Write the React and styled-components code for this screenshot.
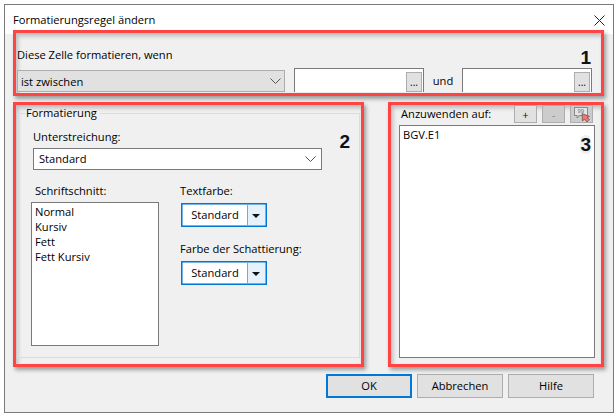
import React from "react";
import styled, { createGlobalStyle } from "styled-components";

const Global = createGlobalStyle`
  html, body {
    margin: 0;
    padding: 0;
    background: #fff;
  }
  * {
    box-sizing: border-box;
  }
`;

const ChevronIcon = () => (
  <svg width="11" height="6" viewBox="0 0 11 6">
    <path d="M0.5 0.5 L5.5 5.5 L10.5 0.5" fill="none" stroke="#555" strokeWidth="1" />
  </svg>
);

const RangeIcon = () => (
  <svg width="21" height="17" viewBox="0 0 21 17">
    <rect x="3.5" y="1.5" width="13" height="8" fill="#e4e4e4" stroke="#8a8a8a" />
    <path d="M6 9.5 L6 12 L9 9.5" fill="#e4e4e4" stroke="#8a8a8a" />
    <text x="6.5" y="7" fontSize="6" fontFamily="Liberation Sans, sans-serif" fill="#777">99</text>
    <path d="M11 7.5 L11.5 15 L13.5 13 L16 16 L18.5 13.5 L16 11.5 L18.5 10.5 Z" fill="#f27474" stroke="#6f5555" strokeWidth="0.8" />
  </svg>
);

const App = () => {
  return (
    <Page>
      <Global />
      <Window>
        <TitleBar>
          <Title>Formatierungsregel ändern</Title>
          <CloseButton>
            <svg width="11" height="11" viewBox="0 0 11 11">
              <path d="M0.5 0.5 L10.5 10.5 M10.5 0.5 L0.5 10.5" stroke="#222" strokeWidth="1" fill="none" />
            </svg>
          </CloseButton>
        </TitleBar>
        <Body>
          <ConditionFrame>
            <ConditionLabel>Diese Zelle formatieren, wenn</ConditionLabel>
            <ConditionRow>
              <ConditionSelect>
                <span>ist zwischen</span>
                <ChevronIcon />
              </ConditionSelect>
              <ValueInput>
                <EllipsisButton>...</EllipsisButton>
              </ValueInput>
              <AndLabel>und</AndLabel>
              <ValueInput>
                <EllipsisButton>...</EllipsisButton>
              </ValueInput>
            </ConditionRow>
            <Marker $right={10} $top={15}>1</Marker>
          </ConditionFrame>

          <Columns>
            <FormatFrame>
              <GroupBox>
                <Legend>Formatierung</Legend>
                <FieldLabel>Unterstreichung:</FieldLabel>
                <UnderlineSelect>
                  <span>Standard</span>
                  <ChevronIcon />
                </UnderlineSelect>
                <StyleColumns>
                  <StyleColumn>
                    <StyleLabel>Schriftschnitt:</StyleLabel>
                    <StyleList>
                      <StyleItem>Normal</StyleItem>
                      <StyleItem>Kursiv</StyleItem>
                      <StyleItem>Fett</StyleItem>
                      <StyleItem>Fett Kursiv</StyleItem>
                    </StyleList>
                  </StyleColumn>
                  <ColorColumn>
                    <FieldLabel>Textfarbe:</FieldLabel>
                    <ColorButton>
                      <ColorName>Standard</ColorName>
                      <ColorArrow />
                    </ColorButton>
                    <ShadeLabel>Farbe der Schattierung:</ShadeLabel>
                    <ColorButton>
                      <ColorName>Standard</ColorName>
                      <ColorArrow />
                    </ColorButton>
                  </ColorColumn>
                </StyleColumns>
              </GroupBox>
              <Marker $right={11} $top={27}>2</Marker>
            </FormatFrame>

            <ApplyFrame>
              <ApplyHeader>
                <ApplyLabel>Anzuwenden auf:</ApplyLabel>
                <ToolButton>+</ToolButton>
                <ToolButton $disabled>-</ToolButton>
                <ToolButton $disabled>
                  <RangeIcon />
                </ToolButton>
              </ApplyHeader>
              <RangeList>BGV.E1</RangeList>
              <Marker $right={10} $top={30} $halo>3</Marker>
            </ApplyFrame>
          </Columns>

          <Footer>
            <DialogButton $primary>OK</DialogButton>
            <DialogButton>Abbrechen</DialogButton>
            <DialogButton>Hilfe</DialogButton>
          </Footer>
        </Body>
      </Window>
    </Page>
  );
};

export default App;

const Page = styled.div`
  width: 615px;
  height: 413px;
  padding: 4px 1px 0 4px;
  overflow: hidden;
  font-family: "Open Sans", "Noto Sans", sans-serif;
  font-size: 11.15px;
  color: #000;
`;
const Window = styled.div`
  width: 610px;
  height: 409px;
  border: 1px solid #7a7a7a;
  background: #f0f0f0;
  display: flex;
  flex-direction: column;
`;
const TitleBar = styled.div`
  height: 29px;
  flex: none;
  background: #fff;
  display: flex;
  justify-content: space-between;
  padding: 7px 8px 0 8px;
`;
const Title = styled.div`
  line-height: 16px;
`;
const CloseButton = styled.div`
  width: 11px;
  height: 11px;
  margin-top: 2px;
`;
const Body = styled.div`
  flex: 1;
  display: flex;
  flex-direction: column;
  padding: 0 9px 0 8px;
  margin-top: -4px;
`;
const Frame = styled.div`
  position: relative;
  border: 3px solid #ff4444;
  background: #f0f0f0;
  box-shadow: 2px 3px 4px rgba(0, 0, 0, 0.35), inset 2px 3px 4px rgba(0, 0, 0, 0.22);
`;
const ConditionFrame = styled(Frame)`
  height: 66px;
  padding: 14px 0 0 1px;
`;
const ConditionLabel = styled.div`
  line-height: 16px;
`;
const ConditionRow = styled.div`
  display: flex;
  align-items: flex-end;
  margin-top: 5px;
`;
const ConditionSelect = styled.div`
  width: 268px;
  height: 22px;
  border: 1px solid #adadad;
  background: #e1e1e1;
  padding: 0 3px;
  display: flex;
  align-items: center;
  justify-content: space-between;
  margin-right: 9px;
`;
const ValueInput = styled.div`
  width: 130px;
  height: 24px;
  background: #fff;
  border: 1px solid #7a7a7a;
  border-bottom: none;
  padding: 3px 1px 0 0;
  display: flex;
  justify-content: flex-end;
`;
const EllipsisButton = styled.div`
  width: 16px;
  height: 20px;
  background: #e1e1e1;
  border: 1px solid #adadad;
  text-align: center;
  line-height: 18px;
  font-size: 10px;
`;
const AndLabel = styled.div`
  width: 38px;
  height: 24px;
  line-height: 26px;
  text-align: center;
`;
const Marker = styled.div`
  position: absolute;
  right: ${(p) => p.$right}px;
  top: ${(p) => p.$top}px;
  font-family: "Liberation Sans", sans-serif;
  font-weight: 700;
  font-size: 19px;
  line-height: 19px;
  color: #111;
  ${(p) => p.$halo && "background: #efefef; border-radius: 8px;"}
`;
const Columns = styled.div`
  display: flex;
  gap: 24px;
  margin-top: 6px;
`;
const FormatFrame = styled(Frame)`
  width: 351px;
  height: 265px;
  padding: 0 1px 0 1px;
`;
const GroupBox = styled.fieldset`
  margin: 0;
  height: 253px;
  min-width: 0;
  padding: 0 0 0 15px;
  border: 1px solid #dcdcdc;
`;
const Legend = styled.legend`
  margin-left: -7px;
  padding: 0 3px 0 0;
  line-height: 16px;
`;
const FieldLabel = styled.div`
  line-height: 16px;
  margin-top: 8px;
`;
const UnderlineSelect = styled.div`
  width: 289px;
  height: 22px;
  margin-top: 3px;
  border: 1px solid #7a7a7a;
  background: #fff;
  padding: 0 5px 1px;
  display: flex;
  align-items: center;
  justify-content: space-between;
`;
const StyleColumns = styled.div`
  display: flex;
  margin: 5px 0 0 -2px;
`;
const StyleColumn = styled.div`
  width: 149px;
`;
const StyleLabel = styled(FieldLabel)`
  margin-left: 4px;
`;
const StyleList = styled.div`
  width: 128px;
  height: 144px;
  margin-top: 3px;
  border: 1px solid #7a7a7a;
  background: #fff;
  padding: 1px 3px;
`;
const StyleItem = styled.div`
  line-height: 15px;
`;
const ColorColumn = styled.div`
  display: flex;
  flex-direction: column;
  align-items: flex-start;
`;
const ShadeLabel = styled(FieldLabel)`
  margin-top: 14px;
`;
const ColorButton = styled.div`
  width: 86px;
  height: 24px;
  margin: 4px 0 0 1px;
  border: 1px solid #0078d7;
  box-shadow: inset 0 0 0 0.5px #0078d7;
  background: #e5f1fb;
  display: flex;
  padding: 1px;
`;
const ColorName = styled.div`
  flex: 1;
  background: #fff;
  text-align: center;
  line-height: 20px;
  border-right: 1px solid #a0a0a0;
  margin-right: 2px;
`;
const ColorArrow = styled.div`
  width: 15px;
  position: relative;
  &::after {
    content: "";
    position: absolute;
    left: 2px;
    top: 9px;
    border-left: 4px solid transparent;
    border-right: 4px solid transparent;
    border-top: 4px solid #111;
  }
`;
const ApplyFrame = styled(Frame)`
  width: 216px;
  height: 265px;
  padding: 0 6px 6px 8px;
  display: flex;
  flex-direction: column;
`;
const ApplyHeader = styled.div`
  display: flex;
  height: 20px;
  gap: 5px;
  padding-right: 2px;
`;
const ApplyLabel = styled.div`
  flex: 1;
  margin-left: 2px;
  line-height: 18px;
`;
const ToolButton = styled.div`
  width: 23px;
  height: 18px;
  border: 1px solid #adadad;
  background: ${(p) => (p.$disabled ? "#cccccc" : "#e1e1e1")};
  color: ${(p) => (p.$disabled ? "#8a8a8a" : "#111")};
  display: flex;
  align-items: center;
  justify-content: center;
`;
const RangeList = styled.div`
  flex: 1;
  border: 1px solid #7a7a7a;
  background: #fff;
  padding: 1px 3px;
  line-height: 16px;
`;
const Footer = styled.div`
  display: flex;
  justify-content: flex-end;
  gap: 5px;
  margin-top: 7px;
  padding-right: 10px;
`;
const DialogButton = styled.div`
  width: 86px;
  height: 24px;
  background: #e1e1e1;
  border: ${(p) => (p.$primary ? "2px solid #0078d7" : "1px solid #adadad")};
  text-align: center;
  line-height: ${(p) => (p.$primary ? "20px" : "22px")};
`;
